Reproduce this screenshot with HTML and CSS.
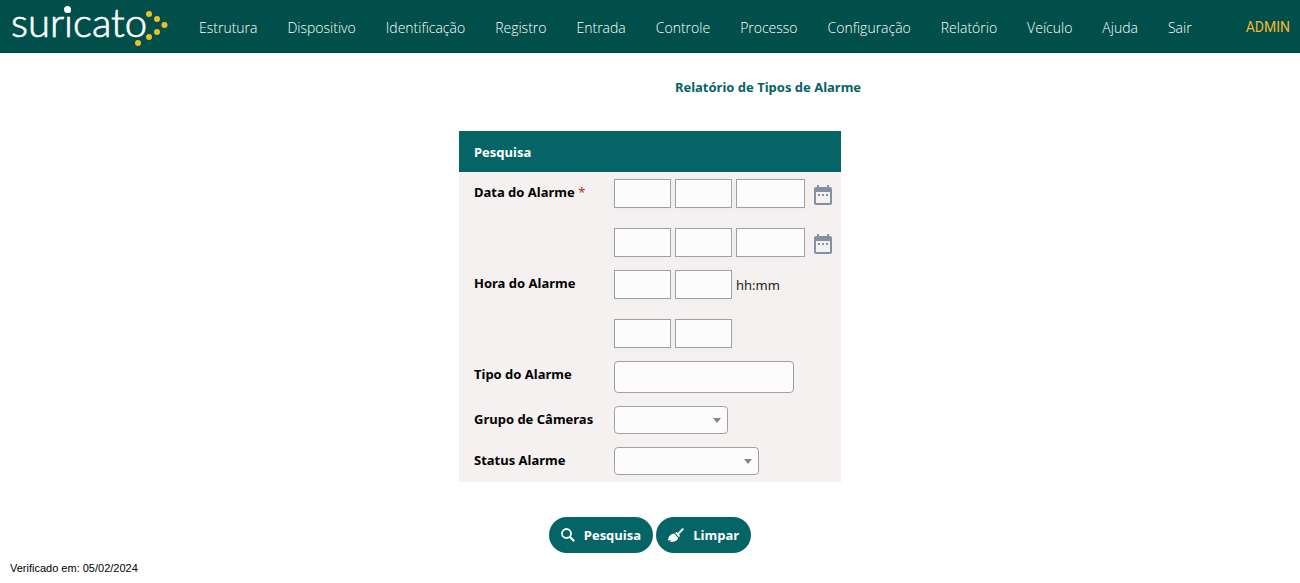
FILE: index.html
```html
<!DOCTYPE html>
<html lang="pt-BR">
  <head>
    <meta charset="UTF-8" />
    <meta name="viewport" content="width=device-width, initial-scale=1" />
    <title>Relatório de Tipos de Alarme</title>
    <link rel="stylesheet" href="styles.css">
  </head>
  <body>
    <header class="topbar">
      <a class="logo" href="#">
        <svg width="160" height="48" viewBox="0 0 160 48">
          <text class="logo-text" x="1" y="34">suricato</text>
          <circle cx="57.500" cy="6.500" r="3.500" fill="#fff" />
          <g fill="#efbd2d">
            <circle cx="139" cy="11" r="3" />
            <circle cx="147" cy="16" r="3" />
            <circle cx="154.500" cy="22" r="3" />
            <circle cx="147" cy="29" r="3" />
            <circle cx="139" cy="34" r="3" />
            <circle cx="128" cy="40" r="3" />
          </g>
        </svg>
      </a>
      <nav class="menu">
        <a href="#">Estrutura</a>
        <a href="#">Dispositivo</a>
        <a href="#">Identificação</a>
        <a href="#">Registro</a>
        <a href="#">Entrada</a>
        <a href="#">Controle</a>
        <a href="#">Processo</a>
        <a href="#">Configuração</a>
        <a href="#">Relatório</a>
        <a href="#">Veículo</a>
        <a href="#">Ajuda</a>
        <a href="#">Sair</a>
      </nav>
      <a class="user" href="#">ADMIN</a>
    </header>

    <main>
      <h1>Relatório de Tipos de Alarme</h1>

      <form>
        <div class="card">
          <h2>Pesquisa</h2>
          <div class="fields">
            <label for="dia1">Data do Alarme <span class="required">*</span></label>
            <div class="stack">
              <div class="line">
                <input type="text" class="short" id="dia1" aria-label="Dia inicial" />
                <input type="text" class="short" aria-label="Mês inicial" />
                <input type="text" class="year" aria-label="Ano inicial" />
                <button type="button" class="calendar" aria-label="Calendário">
                  <svg width="24" height="24" viewBox="0 0 24 24"><path fill="#8491a5" fill-rule="evenodd" d="M5 3h1V1h2v2h8V1h2v2h1a2 2 0 0 1 2 2v14a2 2 0 0 1-2 2H5a2 2 0 0 1-2-2V5a2 2 0 0 1 2-2zM5 8v11h14V8zM7 10h2v2H7zM11 10h2v2h-2zM15 10h2v2h-2z" /></svg>
                </button>
              </div>
              <div class="line">
                <input type="text" class="short" aria-label="Dia final" />
                <input type="text" class="short" aria-label="Mês final" />
                <input type="text" class="year" aria-label="Ano final" />
                <button type="button" class="calendar" aria-label="Calendário">
                  <svg width="24" height="24" viewBox="0 0 24 24"><path fill="#8491a5" fill-rule="evenodd" d="M5 3h1V1h2v2h8V1h2v2h1a2 2 0 0 1 2 2v14a2 2 0 0 1-2 2H5a2 2 0 0 1-2-2V5a2 2 0 0 1 2-2zM5 8v11h14V8zM7 10h2v2H7zM11 10h2v2h-2zM15 10h2v2h-2z" /></svg>
                </button>
              </div>
            </div>

            <label for="hora1">Hora do Alarme</label>
            <div class="stack">
              <div class="line">
                <input type="text" class="short" id="hora1" aria-label="Hora inicial" />
                <input type="text" class="short" aria-label="Minuto inicial" />
                <span class="hint">hh:mm</span>
              </div>
              <div class="line">
                <input type="text" class="short" aria-label="Hora final" />
                <input type="text" class="short" aria-label="Minuto final" />
              </div>
            </div>

            <label for="tipo">Tipo do Alarme</label>
            <input type="text" class="rounded" id="tipo" />

            <label for="grupo">Grupo de Câmeras</label>
            <div class="select">
              <select class="group" id="grupo"><option></option></select>
            </div>

            <label for="status">Status Alarme</label>
            <div class="select">
              <select class="status" id="status"><option></option></select>
            </div>
          </div>
        </div>

        <div class="actions">
          <button type="submit" class="btn">
            <svg width="14" height="14" viewBox="0 0 14 14" fill="none" stroke="#fff"><circle cx="5.500" cy="5.500" r="4.500" stroke-width="1.800" /><path d="M9 9l4.200 4.200" stroke-width="2.200" /></svg>
            Pesquisa
          </button>
          <button type="reset" class="btn">
            <svg width="16" height="14" viewBox="0 0 16 14" fill="#fff"><path d="M14.500 0L16 1.300 11 6.500l1 1.300-1 1.400L7 5l1.600-.9 1 .9zM6.200 5.600l4 4.300C9.500 12.800 6 14 1.600 13.800l1.600-2-3.200 1C.3 8.500 3 5.600 6.200 5.600z" /></svg>
            Limpar
          </button>
        </div>
      </form>
    </main>

    <footer>Verificado em: 05/02/2024</footer>
  </body>
</html>
```

FILE: styles.css
```css
* {
  box-sizing: border-box;
}

body {
  margin: 0;
  background-color: #fff;
  color: #000;
  font-family: "Noto Sans", "Segoe UI", sans-serif;
  font-size: 13px;
}

.topbar {
  display: flex;
  align-items: center;
  height: 53px;
  padding: 2px 10px 0;
  background-color: #004f4a;
  border-bottom: 1px solid #00433f;
}

.logo svg {
  display: block;
  overflow: visible;
}

.logo-text {
  font-family: Lato, sans-serif;
  font-size: 40px;
  font-weight: 300;
  fill: #fff;
  stroke: #fff;
  stroke-width: 0.7px;
}

.menu {
  display: flex;
  gap: 30px;
  margin-left: 29px;
}

.menu a {
  color: #fff;
  font-family: "Open Sans", sans-serif;
  font-size: 14px;
  font-weight: 300;
  text-decoration: none;
}

.user {
  margin-left: auto;
  color: #f5b52e;
  font-family: Roboto, sans-serif;
  font-size: 14px;
  text-decoration: none;
}

h1 {
  margin: 24px 0 34px;
  padding-left: 236px;
  color: #056466;
  font-size: 13px;
  line-height: 20px;
  text-align: center;
}

.card {
  width: fit-content;
  margin: 0 auto;
  background-color: #f5f1f1;
}

h2 {
  margin: 0;
  padding: 11px 15px 10px;
  background-color: #056466;
  color: #fff;
  font-size: 13px;
  line-height: 20px;
}

.fields {
  display: grid;
  grid-template-columns: 140px auto;
  row-gap: 13px;
  padding: 7px 6px 7px 15px;
}

label {
  padding-top: 3px;
  font-weight: bold;
  line-height: 20px;
}

.required {
  color: #a83232;
  font-weight: normal;
}

.stack {
  display: flex;
  flex-direction: column;
  gap: 20px;
}

.line {
  display: flex;
  align-items: flex-end;
  gap: 4px;
}

input,
select {
  height: 29px;
  padding: 0 6px;
  border: 1px solid #a0a0a0;
  border-radius: 0;
  background-color: #fcfcfc;
  font-family: inherit;
  font-size: 13px;
}

.short {
  width: 57px;
  box-shadow: 0 2px 6px #ececf0;
}

.year {
  width: 69px;
  box-shadow: 0 2px 6px #ececf0;
}

.rounded {
  width: 180px;
  height: 32px;
  border-radius: 4px;
}

.calendar {
  height: 24px;
  margin-left: 2px;
  padding: 0;
  border: none;
  background: none;
  cursor: pointer;
}

.hint {
  align-self: center;
  color: #222;
}

.select {
  display: flex;
  position: relative;
  width: fit-content;
}

.select::after {
  content: "";
  position: absolute;
  top: 12px;
  right: 7px;
  border-top: 5px solid #858585;
  border-left: 4px solid transparent;
  border-right: 4px solid transparent;
  pointer-events: none;
}

select {
  height: 28px;
  border-radius: 4px;
  appearance: none;
}

.group {
  width: 114px;
}

.status {
  width: 145px;
}

.actions {
  display: flex;
  justify-content: center;
  gap: 3px;
  margin-top: 35px;
}

.btn {
  display: flex;
  align-items: center;
  gap: 9px;
  height: 36px;
  padding: 0 12px;
  border: none;
  border-radius: 18px;
  background-color: #056466;
  color: #fff;
  font-family: "Open Sans", "Segoe UI", sans-serif;
  font-size: 13px;
  font-weight: bold;
  cursor: pointer;
}

.btn:hover {
  background-color: #004f4a;
}

footer {
  padding: 8px 10px 0;
  font-family: "Liberation Sans", Arial, sans-serif;
  font-size: 11px;
  line-height: 14px;
}
```
